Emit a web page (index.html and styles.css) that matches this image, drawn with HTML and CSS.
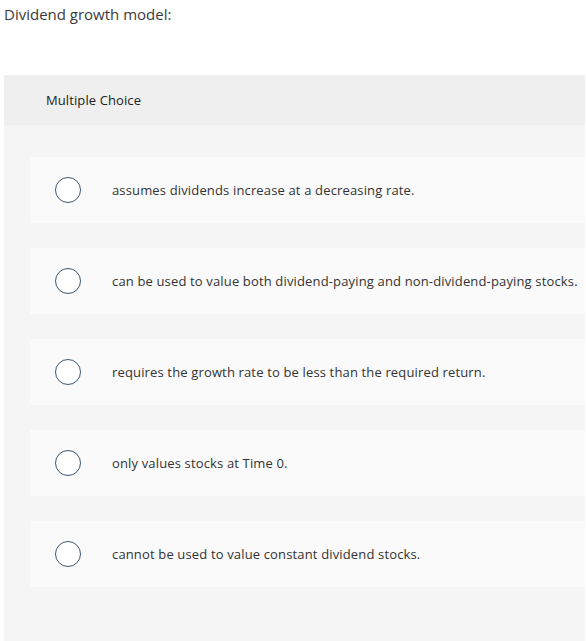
FILE: index.html
```html
<!DOCTYPE html>
<html>
<head>
<meta charset="utf-8">
<link rel="stylesheet" href="styles.css">
</head>
<body>
<div class="question">Dividend growth model:</div>
<div class="panel">
  <div class="panel-head">Multiple Choice</div>
  <div class="options">
    <div class="option"><span class="radio"></span><span class="label">assumes dividends increase at a decreasing rate.</span></div>
    <div class="option"><span class="radio"></span><span class="label">can be used to value both dividend-paying and non-dividend-paying stocks.</span></div>
    <div class="option"><span class="radio"></span><span class="label">requires the growth rate to be less than the required return.</span></div>
    <div class="option"><span class="radio"></span><span class="label">only values stocks at Time 0.</span></div>
    <div class="option"><span class="radio"></span><span class="label">cannot be used to value constant dividend stocks.</span></div>
  </div>
</div>
</body>
</html>
```
FILE: styles.css
```css
html, body {
  margin: 0;
  padding: 0;
  background: #ffffff;
}
body {
  font-family: "Open Sans", "Liberation Sans", sans-serif;
  color: #333333;
  overflow: hidden;
  height: 641px;
}
.question {
  font-size: 15px;
  line-height: 20px;
  padding: 4px 0 0 4px;
  color: #3a3a3a;
}
.panel {
  margin: 51px 1px 0 4px;
  background: #f5f5f5;
  height: 566px;
}
.panel-head {
  background: #efefef;
  height: 50px;
  box-sizing: border-box;
  padding: 17px 0 0 42px;
  font-size: 13px;
  letter-spacing: 0.1px;
  line-height: 16px;
  color: #222;
}
.options {
  display: flex;
  flex-direction: column;
  gap: 25px;
  padding: 32px 0 0 26px;
}
.option {
  background: #fafafa;
  height: 66px;
  display: flex;
  align-items: center;
}
.radio {
  width: 24px;
  height: 24px;
  border: 1.5px solid #3d5670;
  border-radius: 50%;
  margin-left: 25px;
  background: #fff;
  flex: none;
}
.label {
  margin-left: 31px;
  font-size: 13px;
  letter-spacing: 0.15px;
  color: #333;
}
```
